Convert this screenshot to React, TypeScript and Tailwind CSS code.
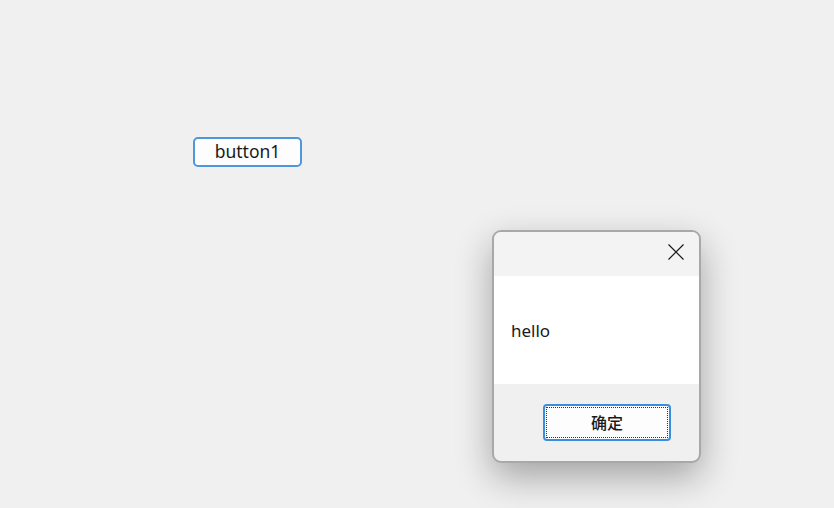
export default function App() {
  return (
    <div
      className="relative w-[834px] h-[508px] overflow-hidden bg-[#f0f0f0]"
      style={{ fontFamily: '"Noto Sans", "Noto Sans CJK SC", sans-serif' }}
    >
      <div className="pl-[193px] pt-[137px]">
        <button className="flex h-[30px] w-[109px] items-center justify-center rounded-[5px] border-2 border-[#4f96dc] bg-[#fdfdfd] pb-[1px] text-[17.5px] leading-none text-[#1a1a1a]">
          button1
        </button>
      </div>

      <div className="absolute left-[492px] top-[230px] flex h-[233px] w-[209px] flex-col overflow-hidden rounded-[9px] border-2 border-[#a8a8a8] bg-[#f0f0f0] shadow-[0_14px_36px_rgba(0,0,0,0.32)]">
        <div className="flex h-[44px] shrink-0 items-start justify-end bg-[#f3f3f3] pr-[15px] pt-[11.5px]">
          <svg width="16" height="16" viewBox="0 0 16 16" fill="none" stroke="#1a1a1a" strokeWidth="1.2">
            <path d="M0.5 0.5 L15.5 15.5 M15.5 0.5 L0.5 15.5" />
          </svg>
        </div>
        <div className="flex h-[108px] shrink-0 items-center bg-white pl-[17px]">
          <span className="text-[17px] leading-none text-[#1a1a1a]">hello</span>
        </div>
        <div className="flex flex-1 items-start pl-[49px] pt-[20px]">
          <button className="flex h-[37px] w-[128px] items-center justify-center rounded-[4px] border-2 border-[#3a8fdc] bg-[#fdfdfd] p-[1px]">
            <span className="flex h-full w-full items-center justify-center border border-dotted border-[#333] text-[16px] font-medium leading-none text-[#1a1a1a]">
              确定
            </span>
          </button>
        </div>
      </div>
    </div>
  );
}
